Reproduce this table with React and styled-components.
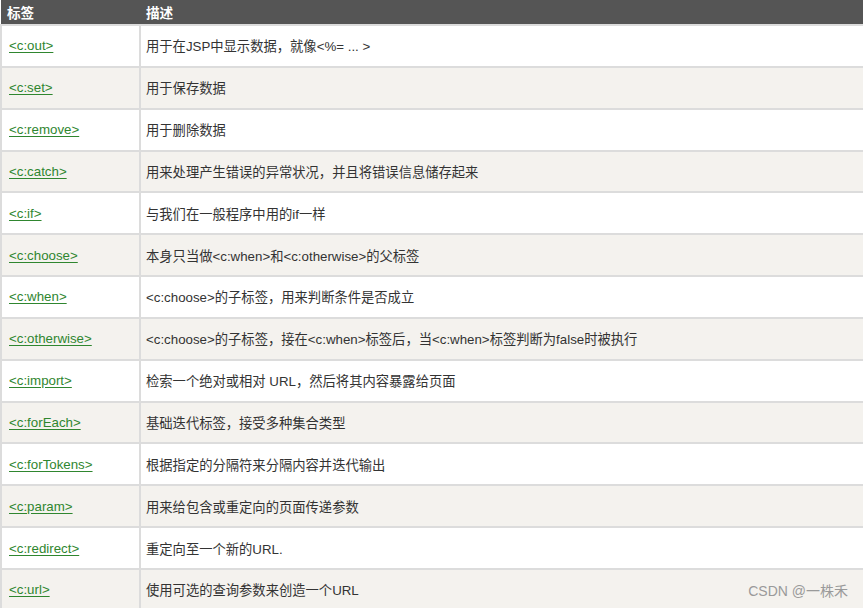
import React from 'react';
import styled, { createGlobalStyle } from 'styled-components';

const GlobalStyle = createGlobalStyle`
  html, body {
    margin: 0;
    padding: 0;
    background: #ffffff;
    overflow: hidden;
  }
`

const Page = styled.div`
  position: relative;
  width: 863px;
  height: 608px;
  overflow: hidden;
  font-family: "Liberation Sans", Arial, "Noto Sans CJK SC", sans-serif;
`

const Table = styled.table`
  width: 863px;
  border-collapse: collapse;
  table-layout: fixed;
`

const HeadCell = styled.th`
  height: 24px;
  padding: 0 6px;
  background: #555555;
  color: #ffffff;
  font-size: 13.6px;
  font-weight: bold;
  text-align: left;
  border-bottom: 1px solid #a8a8a8;
  &:first-child {
    width: 127px;
  }
`

const Row = styled.tr`
  background: ${props => props.$odd ? '#ffffff' : '#f4f2ee'};
`

const Cell = styled.td`
  height: 39.85px;
  padding: 0 5px;
  font-size: 13.3px;
  color: #333333;
  border-top: 2px solid #dcdcdc;
  border-left: 2px solid #dcdcdc;
  vertical-align: middle;
  white-space: nowrap;
  &:first-child {
    padding-left: 7px;
  }
`

const TagLink = styled.a`
  color: #2f862f;
  text-decoration: underline;
  text-underline-offset: 2px;
`

const Watermark = styled.div`
  position: absolute;
  right: 15px;
  bottom: 8px;
  font-size: 14px;
  color: #9a9a9a;
`

const rows = [
  ['<c:out>', '用于在JSP中显示数据，就像<%= ... >'],
  ['<c:set>', '用于保存数据'],
  ['<c:remove>', '用于删除数据'],
  ['<c:catch>', '用来处理产生错误的异常状况，并且将错误信息储存起来'],
  ['<c:if>', '与我们在一般程序中用的if一样'],
  ['<c:choose>', '本身只当做<c:when>和<c:otherwise>的父标签'],
  ['<c:when>', '<c:choose>的子标签，用来判断条件是否成立'],
  ['<c:otherwise>', '<c:choose>的子标签，接在<c:when>标签后，当<c:when>标签判断为false时被执行'],
  ['<c:import>', '检索一个绝对或相对 URL，然后将其内容暴露给页面'],
  ['<c:forEach>', '基础迭代标签，接受多种集合类型'],
  ['<c:forTokens>', '根据指定的分隔符来分隔内容并迭代输出'],
  ['<c:param>', '用来给包含或重定向的页面传递参数'],
  ['<c:redirect>', '重定向至一个新的URL.'],
  ['<c:url>', '使用可选的查询参数来创造一个URL'],
]

const App = () => {
  return (
    <Page>
      <GlobalStyle />
      <Table>
        <thead>
          <tr>
            <HeadCell>标签</HeadCell>
            <HeadCell>描述</HeadCell>
          </tr>
        </thead>
        <tbody>
          {rows.map(([tag, desc], i) => (
            <Row key={tag} $odd={i % 2 === 0}>
              <Cell><TagLink href="#">{tag}</TagLink></Cell>
              <Cell>{desc}</Cell>
            </Row>
          ))}
        </tbody>
      </Table>
      <Watermark>CSDN @一株禾</Watermark>
    </Page>
  )
}

export default App;
